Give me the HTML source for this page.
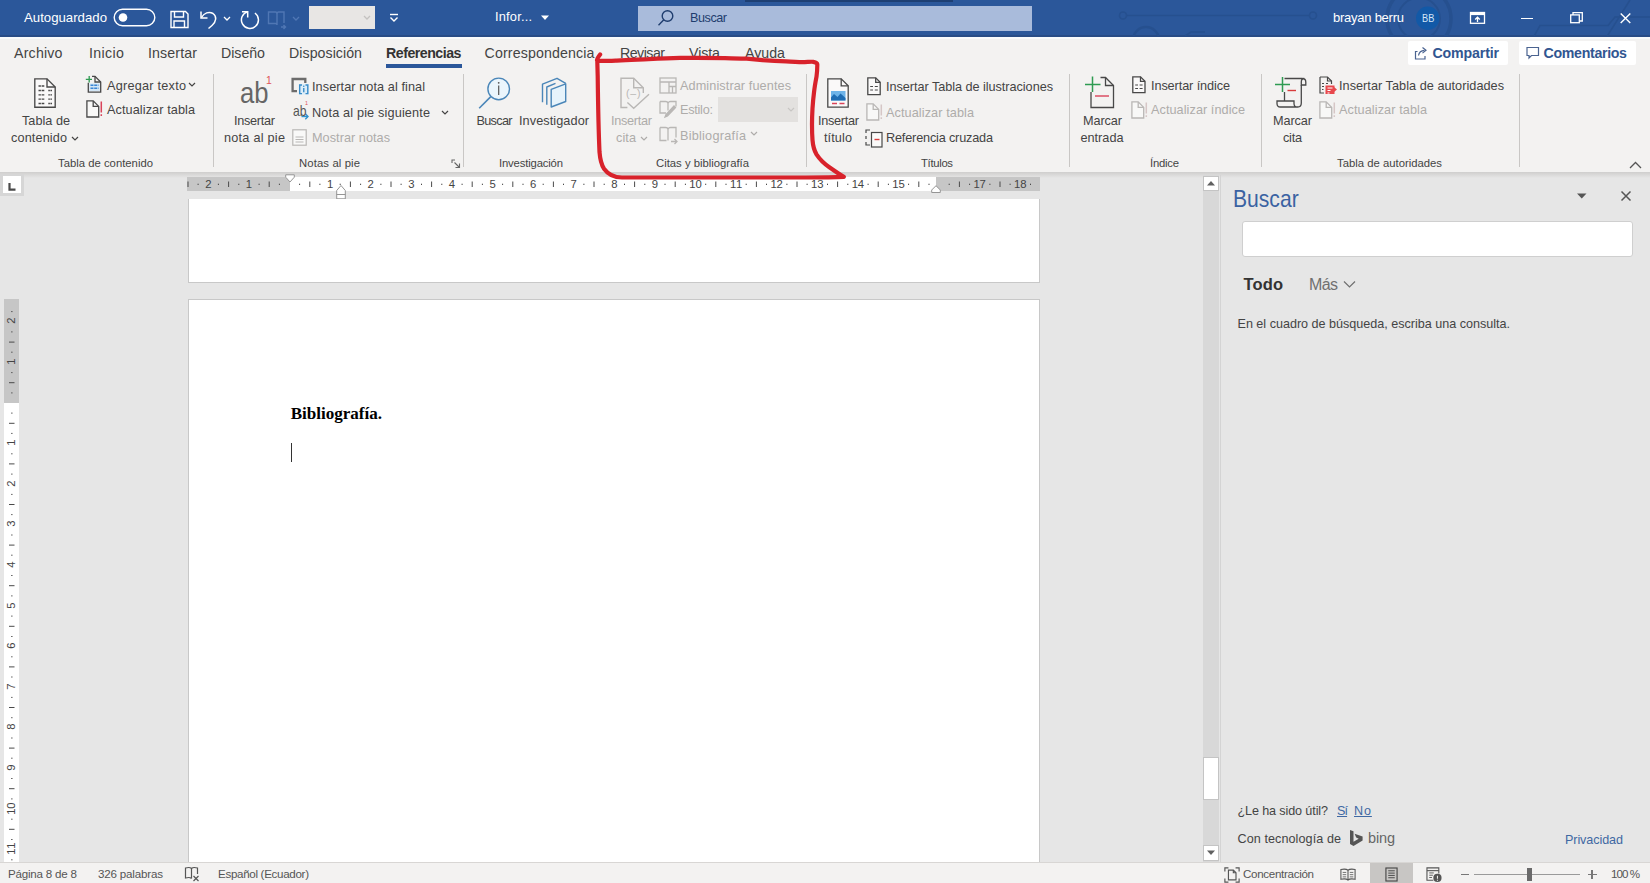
<!DOCTYPE html>
<html lang="es"><head><meta charset="utf-8"><title>Word</title><style>
html,body{margin:0;padding:0;}
body{width:1650px;height:883px;overflow:hidden;position:relative;background:#e6e6e6;font-family:"Liberation Sans",sans-serif;color:#444;}
div,svg,span{position:absolute;}
span{white-space:pre;line-height:1;}
svg{overflow:visible;}
</style></head><body>
<div style="left:0px;top:0px;width:1650px;height:36.5px;background:#2b579a;"></div>
<div style="left:0px;top:35px;width:1650px;height:1.5px;background:#284c86;"></div>
<div style="left:1100px;top:0;width:550px;height:36px;overflow:hidden;"><svg style="left:0;top:0;" width="550" height="36" viewBox="0 0 550 36"><g fill="none" stroke="#26508f" stroke-width="1.600"><path d="M23 15.500H213"/><circle cx="23" cy="15.500" r="3.500" fill="#2b579a"/><circle cx="213" cy="15.500" r="3.500" fill="#2b579a"/><circle cx="46" cy="40" r="13" stroke-width="2.500"/><path d="M85 36l6-4h14"/><circle cx="319" cy="18.700" r="32" stroke-width="3.500"/><circle cx="319" cy="18.700" r="21" stroke-width="2"/><path d="M433 38l7-12.500h68l7-8.500h35M506 38l24-38"/></g></svg></div>
<div style="left:745px;top:0px;width:208px;height:1.5px;background:#1e3f73;"></div>
<svg style="left:113px;top:8px;" width="44" height="19" viewBox="0 0 44 19"><rect x="1.2" y="1.2" width="40.6" height="16.6" rx="8.3" fill="none" stroke="#fff" stroke-width="1.4"/><circle cx="10" cy="9.5" r="4.3" fill="#fff"/></svg>
<svg style="left:170px;top:10px;" width="19" height="19" viewBox="0 0 19 19"><g fill="none" stroke="#fff" stroke-width="1.4"><path d="M1 1.5h14.5l2.5 2.5v13.5h-17z"/><path d="M4.5 1.5v5.5h9v-5.5"/><path d="M4 17.5v-6.500h10.500v6.500"/></g></svg>
<svg style="left:199px;top:9px;" width="20" height="20" viewBox="0 0 20 20"><g fill="none" stroke="#fff" stroke-width="1.5"><path d="M2 2.5v6.500h6.500"/><path d="M2.500 8.500C5 4 10 2 14 4.500c4 2.800 3.500 8-1 12l-3.500 3"/></g></svg>
<svg style="left:223px;top:16px;" width="8" height="6" viewBox="0 0 8 6"><path d="M1 1l3 3 3-3" fill="none" stroke="#fff" stroke-width="1.3"/></svg>
<svg style="left:240px;top:9px;" width="20" height="20" viewBox="0 0 20 20"><g fill="none" stroke="#fff" stroke-width="1.5"><path d="M2 2.700H7.700V8.400"/><path d="M14.900 4A8.500 8.500 0 1 1 7.700 2.700"/></g></svg>
<svg style="left:267px;top:10px;" width="20" height="19" viewBox="0 0 20 19"><g fill="none" stroke="#5077b4" stroke-width="1.4"><path d="M1.500 2h7c.8 0 1.500.7 1.500 1.500V15c0-.8-.7-1.500-1.500-1.500h-7z"/><path d="M10 3.500c0-.8.700-1.500 1.500-1.500H17v11"/><path d="M14 17h4M16.500 15l2 2-2 2"/></g></svg>
<svg style="left:292px;top:16px;" width="8" height="6" viewBox="0 0 8 6"><path d="M1 1l3 3 3-3" fill="none" stroke="#5077b4" stroke-width="1.3"/></svg>
<div style="left:309px;top:6px;width:66px;height:23px;background:#e8e6e4;"></div>
<svg style="left:363px;top:15px;" width="8" height="6" viewBox="0 0 8 6"><path d="M1 1l3 3 3-3" fill="none" stroke="#c4c2c0" stroke-width="1.3"/></svg>
<svg style="left:389px;top:13px;" width="10" height="10" viewBox="0 0 10 10"><path d="M1 1.500h8" stroke="#fff" stroke-width="1.4"/><path d="M1.500 4.500l3.500 3.500 3.500-3.500" fill="none" stroke="#fff" stroke-width="1.400"/></svg>
<svg style="left:540px;top:14px;" width="10" height="7" viewBox="0 0 10 7"><path d="M1 1.500h8l-4 4.500z" fill="#fff"/></svg>
<div style="left:638px;top:6px;width:394px;height:25px;background:#a9bbdb;"></div>
<svg style="left:657px;top:9px;" width="18" height="18" viewBox="0 0 18 18"><g fill="none" stroke="#1f3d6e" stroke-width="1.4"><circle cx="10.500" cy="7" r="5.300"/><path d="M6.800 10.800L1.500 16.200"/></g></svg>
<svg style="left:1415px;top:5px;" width="26" height="26" viewBox="0 0 26 26"><circle cx="12.700" cy="13.300" r="11.700" fill="#1259a7"/></svg>
<svg style="left:1469px;top:11px;" width="17" height="14" viewBox="0 0 17 14"><g fill="none" stroke="#fff" stroke-width="1.300"><rect x="1.500" y="1.500" width="14" height="10.800"/><path d="M1.500 3h14" stroke-width="2.200"/><path d="M8.500 11v-4.500M6.200 8.500l2.300-2.300 2.300 2.300"/></g></svg>
<div style="left:1521px;top:17.5px;width:12px;height:1.4px;background:#fff;"></div>
<svg style="left:1570px;top:12px;" width="13" height="11.5" viewBox="0 0 13 11.5"><g fill="none" stroke="#fff" stroke-width="1.300"><rect x=".7" y="2.900" width="8.600" height="7.800"/><path d="M3 2.900v-2.200h9.300v8.300h-3"/></g></svg>
<svg style="left:1619px;top:11px;" width="14" height="14" viewBox="0 0 14 14"><path d="M1.700 2.500l9.600 9.600M11.300 2.500l-9.600 9.600" stroke="#fff" stroke-width="1.400" fill="none"/></svg>
<div style="left:0px;top:36.5px;width:1650px;height:135.5px;background:#f3f2f1;"></div>
<div style="left:0px;top:36.5px;width:1650px;height:2px;background:#f8fafc;"></div>
<div style="left:386px;top:64.3px;width:76px;height:3.3px;background:#2b579a;"></div>
<div style="left:1408px;top:41px;width:100px;height:24px;background:#fff;border-radius:2px;"></div>
<div style="left:1519px;top:41px;width:117px;height:24px;background:#fff;border-radius:2px;"></div>
<svg style="left:1414px;top:46px;" width="14" height="14" viewBox="0 0 14 14"><g fill="none" stroke="#4a6390" stroke-width="1.200"><path d="M3.500 5.500h-2v7.500h9.500v-3"/><path d="M4.500 9.500c.5-3 2.500-5 6-5.200"/><path d="M8.500 1.500l3.500 2.800-3.500 2.800"/></g></svg>
<svg style="left:1526px;top:46px;" width="14" height="14" viewBox="0 0 14 14"><path d="M1 1.500h11.500v8h-7l-2.500 2.500v-2.500h-2z" fill="none" stroke="#4a6390" stroke-width="1.200"/></svg>
<div style="left:212.5px;top:74px;width:1px;height:93px;background:#c9c7c5;"></div>
<div style="left:463px;top:74px;width:1px;height:93px;background:#c9c7c5;"></div>
<div style="left:806px;top:74px;width:1px;height:93px;background:#c9c7c5;"></div>
<div style="left:1069px;top:74px;width:1px;height:93px;background:#c9c7c5;"></div>
<div style="left:1260.5px;top:74px;width:1px;height:93px;background:#c9c7c5;"></div>
<div style="left:1519px;top:74px;width:1px;height:93px;background:#c9c7c5;"></div>
<svg style="left:34px;top:77.7px;" width="22" height="30" viewBox="0 0 22 30"><g fill="none" stroke="#484848" stroke-width="1.35"><path d="M.8 .8h12.2 l8.2 8.2 v20.2 h-20.4 z" fill="#fff" fill-opacity="0.55"/><path d="M13 .8v8.2 h8.2"/></g><path d="M4.500 8 h6.500" stroke="#484848" stroke-width="1.300" stroke-dasharray="2.400 .700"/><path d="M4.500 12.5 h6.500" stroke="#484848" stroke-width="1.300" stroke-dasharray="2.400 .700"/><path d="M14.300 12.5 h3.700" stroke="#484848" stroke-width="1.300" stroke-dasharray="1.600 .500"/><path d="M4.500 16.8 h6.500" stroke="#484848" stroke-width="1.300" stroke-dasharray="2.400 .700"/><path d="M14.300 16.8 h3.700" stroke="#484848" stroke-width="1.300" stroke-dasharray="1.600 .500"/><path d="M4.500 21.2 h6.500" stroke="#484848" stroke-width="1.300" stroke-dasharray="2.400 .700"/><path d="M14.300 21.2 h3.700" stroke="#484848" stroke-width="1.300" stroke-dasharray="1.600 .500"/><path d="M4.500 25.5 h6.500" stroke="#484848" stroke-width="1.300" stroke-dasharray="2.400 .700"/><path d="M14.300 25.5 h3.700" stroke="#484848" stroke-width="1.300" stroke-dasharray="1.600 .500"/></svg>
<svg style="left:71px;top:135.5px;" width="8" height="6" viewBox="0 0 8 6"><path d="M1 1l3 3 3-3" fill="none" stroke="#444" stroke-width="1.200"/></svg>
<svg style="left:85px;top:75px;" width="18" height="18" viewBox="0 0 18 18"><g fill="none" stroke-width="1.300"><rect x="4.300" y="8.400" width="10.400" height="8" fill="#d3e6f6" stroke="none"/><path d="M3.300 7.800v9.300h12.400v-10l-5.700-5.700h-3" stroke="#484848"/><path d="M10 1.200v5.800h5.700" stroke="#484848"/><path d="M.800 4.300h6.200M4.200 1v6.400" stroke="#2e9b52" stroke-width="1.300"/><path d="M5.500 10.200h8M5.500 13.300h8" stroke="#3b86d6" stroke-width="1.400" stroke-dasharray="3 .700"/></g></svg>
<svg style="left:188px;top:82px;" width="8" height="6" viewBox="0 0 8 6"><path d="M1 1l3 3 3-3" fill="none" stroke="#444" stroke-width="1.200"/></svg>
<svg style="left:86px;top:100px;" width="18" height="18" viewBox="0 0 18 18"><g fill="none" stroke-width="1.300"><path d="M.900 .900h6.300l5.500 5.500v10.600h-11.800z" stroke="#484848" fill="#fff" fill-opacity=".45"/><path d="M7.200 .900v5.500h5.500" stroke="#484848"/><path d="M15.300 1.500v11M15.300 14.300v1.800" stroke="#d9435a" stroke-width="1.500"/></g></svg>
<svg style="left:290px;top:77px;" width="20" height="19" viewBox="0 0 20 19"><g fill="none"><path d="M7 14.200H2.600V2H15.300V6" stroke="#6c6c6c" stroke-width="2.300"/><rect x="8.600" y="7" width="10.400" height="10.600" fill="#dcedf8"/><path d="M12 8H9.700V16.600H12M15.500 8H17.800V16.600H15.500" stroke="#3a8cc8" stroke-width="1.400"/><path d="M13.750 11v4.300" stroke="#3a8cc8" stroke-width="1.400"/><circle cx="13.750" cy="9.300" r=".8" fill="#3a8cc8"/></g></svg>
<svg style="left:297px;top:112px;" width="13" height="9" viewBox="0 0 13 9"><g fill="none" stroke="#2f93cf" stroke-width="1.400"><path d="M4.500 4.500h6.500"/><path d="M8.300 1.800l2.700 2.700-2.700 2.700"/></g></svg>
<svg style="left:441px;top:109.5px;" width="8" height="6" viewBox="0 0 8 6"><path d="M1 1l3 3 3-3" fill="none" stroke="#444" stroke-width="1.200"/></svg>
<svg style="left:292px;top:128.5px;" width="15" height="17" viewBox="0 0 15 17"><g fill="none" stroke="#b9b7b5" stroke-width="1.200"><rect x=".8" y=".8" width="13.400" height="15.400" fill="#fff" fill-opacity=".5"/><path d="M3.500 8h8M3.500 10.500h8M3.500 13h8"/></g></svg>
<svg style="left:451px;top:158.8px;" width="10" height="10" viewBox="0 0 10 10"><g fill="none" stroke="#666" stroke-width="1.100"><path d="M1 4v-3h3"/><path d="M3.500 3.500l5 5"/><path d="M8.500 4.500v4h-4"/></g></svg>
<svg style="left:478px;top:76px;" width="34" height="34" viewBox="0 0 34 34"><g fill="none" stroke="#4a86b8" stroke-width="1.400"><circle cx="20.700" cy="12.900" r="10.800" fill="#eaf5fc"/><path d="M12.800 20.600L1.200 32.200" stroke-width="1.600"/></g><path d="M20.700 9.500v9.500" stroke="#555" stroke-width="1.200"/><circle cx="20.700" cy="6.800" r=".9" fill="#555"/></svg>
<svg style="left:541px;top:76px;" width="28" height="32" viewBox="0 0 28 32"><g fill="none" stroke="#4a86b8" stroke-width="1.400" stroke-linejoin="round"><path d="M1.500 26.300V8.200L16 2.300L24.700 7.400"/><path d="M5.800 28.700V11L14.500 7.400"/><path d="M10.200 13.300L24.700 7.800V25.500L10.200 31Z" fill="#e6f3fb"/></g></svg>
<svg style="left:620px;top:76px;" width="30" height="33" viewBox="0 0 30 33"><g fill="none" stroke="#b9b7b5" stroke-width="1.400"><path d="M7.400 31.500H1V2.300H13.700L23.300 11.800V17"/><path d="M13.700 2.300V11.800H23.300"/><path d="M7.400 26.500L13.700 32.200L29 18.200"/></g></svg>
<svg style="left:640px;top:135.5px;" width="8" height="6" viewBox="0 0 8 6"><path d="M1 1l3 3 3-3" fill="none" stroke="#aeacaa" stroke-width="1.200"/></svg>
<svg style="left:659px;top:76.5px;" width="18" height="17" viewBox="0 0 18 17"><g fill="none" stroke="#b9b7b5" stroke-width="1.300"><rect x="1" y="1" width="16" height="15"/><path d="M1 5h16M10 5v11M10 9.500h7M13.500 9.500v6.500"/></g></svg>
<svg style="left:659px;top:100px;" width="18" height="19" viewBox="0 0 18 19"><g fill="none" stroke="#b9b7b5" stroke-width="1.300"><path d="M1 1.500v11.500h6M1 1.500h5.500c1.500 0 2.500 1 2.500 2v7M9 3.500c0-1 1-2 2.500-2h5.500v5"/><path d="M16.500 7.500l-8 8.500-2.500 1 1-2.500 8-8.500z" fill="#b9b7b5"/></g></svg>
<div style="left:718px;top:97px;width:80px;height:25px;background:#e3e1df;"></div>
<svg style="left:787px;top:107px;" width="8" height="6" viewBox="0 0 8 6"><path d="M1 1l3 3 3-3" fill="none" stroke="#c8c6c4" stroke-width="1.200"/></svg>
<svg style="left:659px;top:125.5px;" width="19" height="19" viewBox="0 0 19 19"><g fill="none" stroke="#b9b7b5" stroke-width="1.300"><path d="M1 1.500v13h6.500M1 1.500h5.500c1.500 0 2.500 1 2.500 2v11M9 3.500c0-1 1-2 2.500-2h5.500v10"/><path d="M12 15.500h6M15.500 13l2.500 2.500-2.500 2.500"/></g></svg>
<svg style="left:750px;top:131px;" width="8" height="6" viewBox="0 0 8 6"><path d="M1 1l3 3 3-3" fill="none" stroke="#aeacaa" stroke-width="1.200"/></svg>
<svg style="left:827px;top:78px;" width="22" height="30" viewBox="0 0 22 30"><g fill="none" stroke="#484848" stroke-width="1.3"><path d="M.8 .8h13.4 l7 7 v21.4 h-20.4 z" fill="#fff" fill-opacity="0.55"/><path d="M14.2 .8v7 h7"/></g><rect x="4" y="13" width="14.500" height="9.500" fill="#6db3e8"/><path d="M4 19.500l3-3.500 3.500 3 3-3.500 5 4.500v2.500h-14.500z" fill="#1f6db3"/><path d="M5 25.500h5M12.500 25.500h5" stroke="#d9435a" stroke-width="1.300"/></svg>
<svg style="left:867px;top:77px;" width="14" height="18.5" viewBox="0 0 14 18.5"><g fill="none" stroke="#484848" stroke-width="1.3"><path d="M.8 .8h7.9 l4.5 4.5 v12.4 h-12.4 z" fill="#fff" fill-opacity="0.55"/><path d="M8.7 .8v4.5 h4.5"/></g><path d="M3.200 9.500h2.800M7.800 9.500h3M3.200 13h2.800M7.800 13h3" stroke="#484848" stroke-width="1.200"/></svg>
<svg style="left:865.5px;top:103px;" width="18" height="18" viewBox="0 0 18 18"><g fill="none" stroke-width="1.300"><path d="M.900 .900h6.300l5.500 5.500v10.600h-11.800z" stroke="#b9b7b5" fill="#fff" fill-opacity=".45"/><path d="M7.200 .900v5.500h5.500" stroke="#b9b7b5"/><path d="M15.300 1.500v11M15.300 14.300v1.800" stroke="#d6c6c6" stroke-width="1.500"/></g></svg>
<svg style="left:865px;top:128.5px;" width="18" height="19" viewBox="0 0 18 19"><g fill="none" stroke="#484848" stroke-width="1.200"><path d="M5 1h-4v3M1 7v3M1 13v3h4" /><rect x="6.500" y="3.500" width="10.500" height="14.500" fill="#fff" fill-opacity=".6"/><path d="M9.500 10.500h5" stroke="#d83b3b" stroke-width="1.400"/></g></svg>
<svg style="left:1084px;top:75px;" width="32" height="34" viewBox="0 0 32 34"><g fill="none" stroke-width="1.300"><path d="M7 17v15.500h22.500v-22l-8-8h-5" stroke="#484848"/><path d="M21.500 2.500v8h8" stroke="#484848"/><path d="M1 9.500h15.500M8.500 1.500v15.500" stroke="#2e9b52" stroke-width="1.500"/><path d="M11 21h14" stroke="#d9435a" stroke-width="1.400"/></g></svg>
<svg style="left:1131.5px;top:76px;" width="13.8" height="17.5" viewBox="0 0 13.8 17.5"><g fill="none" stroke="#484848" stroke-width="1.3"><path d="M.8 .8h7.7 l4.5 4.5 v11.4 h-12.2 z" fill="#fff" fill-opacity="0.55"/><path d="M8.5 .8v4.5 h4.5"/></g><path d="M3.200 9h2.800M7.600 9h3M3.200 12.500h2.800M7.600 12.500h3" stroke="#484848" stroke-width="1.200"/></svg>
<svg style="left:1130.5px;top:100.5px;" width="18" height="18" viewBox="0 0 18 18"><g fill="none" stroke-width="1.300"><path d="M.900 .900h6.300l5.500 5.500v10.600h-11.800z" stroke="#b9b7b5" fill="#fff" fill-opacity=".45"/><path d="M7.200 .900v5.500h5.500" stroke="#b9b7b5"/><path d="M15.300 1.500v11M15.300 14.300v1.800" stroke="#d6c6c6" stroke-width="1.500"/></g></svg>
<svg style="left:1274px;top:75px;" width="34" height="34" viewBox="0 0 34 34"><g fill="none" stroke-width="1.300"><path d="M10.500 17v9M10.500 3.500h17.500c2.500 0 3.800 1.500 3.800 3.500v3h-4.500v-3c0-2 1.300-3.500 3-3.500" stroke="#484848"/><path d="M27.300 10v18c0 2.500-1.500 4-3.500 4h-17.500c-2 0-3.300-1.500-3.300-3.500v-2.500h17v2.500c0 2 1.300 3.500 3.300 3.500" stroke="#484848"/><path d="M1 9.500h15M8.500 2v15" stroke="#2e9b52" stroke-width="1.500"/><path d="M13.500 15.500h8.500" stroke="#d83b3b" stroke-width="1.400"/></g></svg>
<svg style="left:1319px;top:75.5px;" width="19" height="19" viewBox="0 0 19 19"><g fill="none" stroke-width="1.200"><path d="M1 1h7.500l4 4v3M1 1v16h4" stroke="#484848"/><path d="M8.500 1v4h4" stroke="#484848"/><path d="M3 7.500h2M3 10.500h2M3 13.500h1.500M7 7.500h2" stroke="#484848"/><rect x="6.500" y="9.500" width="9" height="8.500" fill="#e8484d" stroke="none"/><path d="M15 11l3 2.500-3 2.500z" fill="#e8484d" stroke="none"/><path d="M8.500 12h5M8.500 14.500h3M8.500 17h2" stroke="#fff" stroke-width="1"/></g></svg>
<svg style="left:1318.5px;top:100.5px;" width="18" height="18" viewBox="0 0 18 18"><g fill="none" stroke-width="1.300"><path d="M.900 .900h6.300l5.500 5.500v10.600h-11.800z" stroke="#b9b7b5" fill="#fff" fill-opacity=".45"/><path d="M7.200 .900v5.500h5.500" stroke="#b9b7b5"/><path d="M15.300 1.500v11M15.300 14.300v1.800" stroke="#d6c6c6" stroke-width="1.500"/></g></svg>
<svg style="left:1629px;top:160.5px;" width="13" height="8" viewBox="0 0 13 8"><path d="M1 7l5.500-5.500 5.500 5.500" fill="none" stroke="#555" stroke-width="1.300"/></svg>
<div style="left:0;top:172px;width:1650px;height:5.500px;background:linear-gradient(#cfcecd,#e6e6e6);"></div>
<div style="left:0px;top:173.5px;width:24px;height:22px;background:#d6d6d6;"></div>
<div style="left:3px;top:176px;width:18px;height:16.5px;background:#fff;"></div>
<svg style="left:7px;top:181px;" width="10" height="10" viewBox="0 0 10 10"><path d="M2.500 2v6.700h6" fill="none" stroke="#4a4a4a" stroke-width="2.200"/></svg>
<div style="left:187px;top:177.3px;width:102.5px;height:13.5px;background:#c6c6c6;"></div>
<div style="left:289.5px;top:177.3px;width:646.5px;height:13.5px;background:#fff;"></div>
<div style="left:936px;top:177.3px;width:103.5px;height:13.5px;background:#c6c6c6;"></div>
<svg style="left:187px;top:178.4px;" width="853" height="13" viewBox="0 0 853 13"><g stroke="#4a4a4a" stroke-width="1" fill="none"><path d="M1.0 3.500v5.500"/><path d="M11.1 5.700v1.300"/><path d="M31.4 5.700v1.300"/><path d="M41.6 3.500v5.500"/><path d="M51.8 5.700v1.300"/><path d="M72.1 5.700v1.300"/><path d="M82.2 3.500v5.500"/><path d="M92.4 5.700v1.300"/><path d="M112.6 5.700v1.300"/><path d="M122.8 3.500v5.500"/><path d="M132.9 5.700v1.300"/><path d="M153.2 5.700v1.300"/><path d="M163.4 3.500v5.500"/><path d="M173.6 5.700v1.300"/><path d="M193.9 5.700v1.300"/><path d="M204.0 3.500v5.500"/><path d="M214.1 5.700v1.300"/><path d="M234.5 5.700v1.300"/><path d="M244.6 3.500v5.500"/><path d="M254.8 5.700v1.300"/><path d="M275.1 5.700v1.300"/><path d="M285.2 3.500v5.500"/><path d="M295.4 5.700v1.300"/><path d="M315.6 5.700v1.300"/><path d="M325.8 3.500v5.500"/><path d="M336.0 5.700v1.300"/><path d="M356.2 5.700v1.300"/><path d="M366.4 3.500v5.500"/><path d="M376.5 5.700v1.300"/><path d="M396.9 5.700v1.300"/><path d="M407.0 3.500v5.500"/><path d="M417.2 5.700v1.300"/><path d="M437.5 5.700v1.300"/><path d="M447.6 3.500v5.500"/><path d="M457.8 5.700v1.300"/><path d="M478.0 5.700v1.300"/><path d="M488.2 3.500v5.500"/><path d="M498.4 5.700v1.300"/><path d="M518.7 5.700v1.300"/><path d="M528.8 3.500v5.500"/><path d="M539.0 5.700v1.300"/><path d="M559.2 5.700v1.300"/><path d="M569.4 3.500v5.500"/><path d="M579.5 5.700v1.300"/><path d="M599.9 5.700v1.300"/><path d="M610.0 3.500v5.500"/><path d="M620.1 5.700v1.300"/><path d="M640.5 5.700v1.300"/><path d="M650.6 3.500v5.500"/><path d="M660.8 5.700v1.300"/><path d="M681.1 5.700v1.300"/><path d="M691.2 3.500v5.500"/><path d="M701.4 5.700v1.300"/><path d="M721.6 5.700v1.300"/><path d="M731.8 3.500v5.500"/><path d="M742.0 5.700v1.300"/><path d="M762.2 5.700v1.300"/><path d="M772.4 3.500v5.500"/><path d="M782.6 5.700v1.300"/><path d="M802.9 5.700v1.300"/><path d="M813.0 3.500v5.500"/><path d="M823.1 5.700v1.300"/><path d="M843.5 5.700v1.300"/></g></svg>
<svg style="left:285px;top:174px;" width="10" height="10" viewBox="0 0 10 10"><path d="M.700 .800h8.600v2.400l-4.300 4.800-4.300-4.800z" fill="#fff" stroke="#959595" stroke-width="1"/></svg>
<svg style="left:336px;top:183.5px;" width="10" height="16" viewBox="0 0 10 16"><path d="M.700 6.500L5 1.500L9.300 6.500V10.500H.700Z" fill="#fff" stroke="#959595" stroke-width="1"/><rect x=".700" y="10.500" width="8.600" height="4.300" fill="#fff" stroke="#959595" stroke-width="1"/></svg>
<svg style="left:931px;top:184.5px;" width="10" height="9" viewBox="0 0 10 9"><path d="M.700 7.500v-2.500l4.300-4.300 4.300 4.300v2.500z" fill="#fff" stroke="#959595" stroke-width="1"/></svg>
<div style="left:188px;top:198.5px;width:851.5px;height:84.5px;background:#fff;border:1px solid #c8c8c8;border-top:none;box-sizing:border-box;"></div>
<div style="left:188px;top:299px;width:851.5px;height:563px;background:#fff;border:1px solid #c8c8c8;border-bottom:none;box-sizing:border-box;"></div>
<div style="left:290.5px;top:442.5px;width:1px;height:19px;background:#333;"></div>
<div style="left:4px;top:298.5px;width:15px;height:104px;background:#c6c6c6;"></div>
<div style="left:4px;top:402.5px;width:15px;height:459.5px;background:#fff;"></div>
<svg style="left:4px;top:298.5px;" width="15" height="564" viewBox="0 0 15 564"><g stroke="#4a4a4a" stroke-width="1" fill="none"><path d="M7.200 12.6h1.300"/><path d="M7.200 32.9h1.300"/><path d="M5 43.1h5.500"/><path d="M7.200 53.2h1.300"/><path d="M7.200 73.6h1.300"/><path d="M5 83.7h5.500"/><path d="M7.200 93.9h1.300"/><path d="M7.200 114.1h1.300"/><path d="M5 124.3h5.500"/><path d="M7.200 134.4h1.300"/><path d="M7.200 154.8h1.300"/><path d="M5 164.9h5.500"/><path d="M7.200 175.1h1.300"/><path d="M7.200 195.4h1.300"/><path d="M5 205.5h5.500"/><path d="M7.200 215.6h1.300"/><path d="M7.200 236.0h1.300"/><path d="M5 246.1h5.500"/><path d="M7.200 256.2h1.300"/><path d="M7.200 276.5h1.300"/><path d="M5 286.7h5.500"/><path d="M7.200 296.9h1.300"/><path d="M7.200 317.1h1.300"/><path d="M5 327.3h5.500"/><path d="M7.200 337.5h1.300"/><path d="M7.200 357.8h1.300"/><path d="M5 367.9h5.500"/><path d="M7.200 378.0h1.300"/><path d="M7.200 398.4h1.300"/><path d="M5 408.5h5.500"/><path d="M7.200 418.7h1.300"/><path d="M7.200 439.0h1.300"/><path d="M5 449.1h5.500"/><path d="M7.200 459.2h1.300"/><path d="M7.200 479.5h1.300"/><path d="M5 489.7h5.500"/><path d="M7.200 499.9h1.300"/><path d="M7.200 520.2h1.300"/><path d="M5 530.3h5.500"/><path d="M7.200 540.5h1.300"/><path d="M7.200 560.8h1.300"/></g></svg>
<div style="left:1203px;top:175px;width:16px;height:687px;background:#d8d8d8;"></div>
<div style="left:1203px;top:175.5px;width:15.5px;height:15px;background:#fff;border:1px solid #c4c4c4;box-sizing:border-box;"></div>
<svg style="left:1206px;top:179px;" width="10" height="8" viewBox="0 0 10 8"><path d="M1 6.500l4-4.500 4 4.500z" fill="#606060"/></svg>
<div style="left:1203px;top:757px;width:15.5px;height:43px;background:#fff;border:1px solid #c4c4c4;box-sizing:border-box;"></div>
<div style="left:1203px;top:845px;width:15.5px;height:15.5px;background:#fff;border:1px solid #c4c4c4;box-sizing:border-box;"></div>
<svg style="left:1206px;top:849px;" width="10" height="8" viewBox="0 0 10 8"><path d="M1 1.500l4 4.500 4-4.500z" fill="#606060"/></svg>
<div style="left:1220px;top:175px;width:1px;height:687px;background:#d4d4d4;"></div>
<svg style="left:1576px;top:192px;" width="12" height="8" viewBox="0 0 12 8"><path d="M1 1.500h9.500l-4.750 5z" fill="#555"/></svg>
<svg style="left:1620px;top:190px;" width="12" height="12" viewBox="0 0 12 12"><path d="M1.500 1.500l9 9M10.500 1.500l-9 9" stroke="#555" stroke-width="1.500" fill="none"/></svg>
<div style="left:1242px;top:221px;width:391px;height:35.5px;background:#fff;border:1px solid #cfcfcf;border-radius:3px;box-sizing:border-box;"></div>
<svg style="left:1343px;top:280px;" width="13" height="9" viewBox="0 0 13 9"><path d="M1 1.500l5.500 5.500 5.500-5.500" fill="none" stroke="#707070" stroke-width="1.200"/></svg>
<svg style="left:1349px;top:829px;" width="15" height="18" viewBox="0 0 15 18"><path d="M1 1l3.500 1.300v10.500l5.200-3-2.500-1.200-1.600-3.900 8 2.800v4.100l-9.100 5.300-3.500-2z" fill="#555"/></svg>
<div style="left:0px;top:862px;width:1650px;height:21px;background:#f3f2f1;"></div>
<div style="left:0px;top:862px;width:1650px;height:1px;background:#d8d6d4;"></div>
<svg style="left:184px;top:866px;" width="16" height="16" viewBox="0 0 16 16"><g fill="none" stroke="#555" stroke-width="1.200"><path d="M7.500 2.500c-1-1-3.500-1.200-6-.500v10c2.500-.700 5-.500 6 .500M7.500 2.500v10M7.500 2.500c1-1 3.500-1.200 6-.500v6"/><path d="M9.500 10l5 5M14.500 10l-5 5"/></g></svg>
<svg style="left:1224px;top:866.5px;" width="16" height="16" viewBox="0 0 18 18"><g fill="none" stroke="#555" stroke-width="1.300"><path d="M1 5v-4h4M13 1h4v4M17 13v4h-4M5 17h-4v-4"/><path d="M5 3.500h5.500l3 3v8h-8.500z"/><path d="M10.500 3.500v3h3"/></g></svg>
<svg style="left:1340px;top:867.5px;" width="16" height="13.3" viewBox="0 0 18 15"><g fill="none" stroke="#555" stroke-width="1.200"><path d="M9 2.500c-1.500-1.200-4.500-1.500-8-.800v11c3.500-.700 6.500-.400 8 .800c1.500-1.200 4.500-1.500 8-.800v-11c-3.500-.700-6.500-.400-8 .800zM9 2.500v11"/><path d="M3 5h4M3 7.500h4M3 10h4M11 5h4M11 7.500h4M11 10h4" stroke-width=".9"/></g></svg>
<div style="left:1370px;top:863px;width:43px;height:20px;background:#c8c6c4;"></div>
<svg style="left:1384.5px;top:867px;" width="13" height="15" viewBox="0 0 14 16"><g fill="none" stroke="#444" stroke-width="1.200"><rect x="1" y="1" width="12" height="14"/><path d="M3.500 4h7M3.500 6.500h7M3.500 9h7M3.500 11.500h7" stroke-width="1"/></g></svg>
<svg style="left:1426px;top:867px;" width="16.5" height="15.5" viewBox="0 0 18 17"><g fill="none" stroke="#555" stroke-width="1.200"><path d="M8 14.500h-7v-13.500h13v6"/><path d="M1 4h13"/><path d="M3.500 6.500h5M3.500 9h4M3.500 11.500h3" stroke-width="1"/></g><circle cx="12.500" cy="12" r="4.500" fill="#555"/><path d="M12.500 9.500v3.500M12.500 14v1" stroke="#f3f2f1" stroke-width="1.100"/></svg>
<div style="left:1461px;top:874px;width:8px;height:1.2px;background:#777;"></div>
<div style="left:1474px;top:874.3px;width:106px;height:1px;background:#9a9a9a;"></div>
<div style="left:1527.3px;top:868px;width:4.8px;height:13px;background:#6a6a6a;"></div>
<div style="left:1587.5px;top:874px;width:9px;height:1.1px;background:#777;"></div>
<div style="left:1591.45px;top:870px;width:1.1px;height:9px;background:#777;"></div>
<span style="left:24.00px;top:10.90px;font-size:13.2px;letter-spacing:0.011px;color:#fff;">Autoguardado</span>
<span style="left:495.00px;top:11.10px;font-size:12.8px;letter-spacing:0.203px;color:#fff;">Infor...</span>
<span style="left:690.00px;top:11.70px;font-size:12.6px;letter-spacing:-0.441px;color:#1f3d6e;">Buscar</span>
<span style="left:1333.00px;top:11.00px;font-size:13px;letter-spacing:-0.247px;color:#fff;">brayan berru</span>
<span style="left:1422.30px;top:12.75px;font-size:10.5px;letter-spacing:0.000px;color:#d4e6f8;transform:scaleX(0.8776);transform-origin:0 0;">BB</span>
<span style="left:14.00px;top:45.90px;font-size:14.2px;letter-spacing:0.198px;">Archivo</span>
<span style="left:89.00px;top:45.90px;font-size:14.2px;letter-spacing:0.375px;">Inicio</span>
<span style="left:148.00px;top:45.90px;font-size:14.2px;letter-spacing:0.127px;">Insertar</span>
<span style="left:221.00px;top:45.90px;font-size:14.2px;letter-spacing:-0.034px;">Diseño</span>
<span style="left:289.00px;top:45.90px;font-size:14.2px;letter-spacing:0.045px;">Disposición</span>
<span style="left:386.00px;top:45.90px;font-size:14.2px;letter-spacing:-0.495px;font-weight:700;color:#333;">Referencias</span>
<span style="left:484.50px;top:45.90px;font-size:14.2px;letter-spacing:0.138px;">Correspondencia</span>
<span style="left:620.00px;top:45.90px;font-size:14.2px;letter-spacing:-0.516px;">Revisar</span>
<span style="left:689.00px;top:45.90px;font-size:14.2px;letter-spacing:-0.074px;">Vista</span>
<span style="left:745.00px;top:45.90px;font-size:14.2px;letter-spacing:0.004px;">Ayuda</span>
<span style="left:1432.50px;top:45.90px;font-size:14.2px;letter-spacing:-0.162px;font-weight:700;color:#315691;">Compartir</span>
<span style="left:1543.50px;top:45.90px;font-size:14.2px;letter-spacing:-0.322px;font-weight:700;color:#315691;">Comentarios</span>
<span style="left:22.00px;top:114.65px;font-size:12.7px;letter-spacing:0.004px;">Tabla de</span>
<span style="left:11.00px;top:131.65px;font-size:12.7px;letter-spacing:0.121px;">contenido</span>
<span style="left:107.00px;top:79.65px;font-size:12.7px;letter-spacing:0.236px;">Agregar texto</span>
<span style="left:107.00px;top:103.65px;font-size:12.7px;letter-spacing:0.083px;">Actualizar tabla</span>
<span style="left:58.00px;top:158.35px;font-size:11.3px;letter-spacing:0.009px;">Tabla de contenido</span>
<span style="left:239.50px;top:77.75px;font-size:29.5px;letter-spacing:0.000px;color:#666;transform:scaleX(0.8682);transform-origin:0 0;">ab</span>
<span style="left:266.00px;top:74.75px;font-size:10.5px;letter-spacing:0.000px;color:#e0525a;transform:scaleX(0.9925);transform-origin:0 0;">1</span>
<span style="left:234.00px;top:114.65px;font-size:12.7px;letter-spacing:-0.288px;">Insertar</span>
<span style="left:224.00px;top:131.65px;font-size:12.7px;letter-spacing:0.244px;">nota al pie</span>
<span style="left:312.00px;top:80.65px;font-size:12.7px;letter-spacing:0.074px;">Insertar nota al final</span>
<span style="left:292.50px;top:103.00px;font-size:15px;letter-spacing:0.000px;color:#555;transform:scaleX(0.8090);transform-origin:0 0;">ab</span>
<span style="left:305.20px;top:101.25px;font-size:5.5px;letter-spacing:0.000px;color:#e0525a;transform:scaleX(0.9796);transform-origin:0 0;">1</span>
<span style="left:312.00px;top:106.65px;font-size:12.7px;letter-spacing:0.152px;">Nota al pie siguiente</span>
<span style="left:312.00px;top:131.65px;font-size:12.7px;letter-spacing:0.036px;color:#aeacaa;">Mostrar notas</span>
<span style="left:299.00px;top:158.35px;font-size:11.3px;letter-spacing:0.122px;">Notas al pie</span>
<span style="left:476.50px;top:114.65px;font-size:12.7px;letter-spacing:-0.700px;">Buscar</span>
<span style="left:519.00px;top:114.65px;font-size:12.7px;letter-spacing:0.080px;">Investigador</span>
<span style="left:499.00px;top:158.35px;font-size:11.3px;letter-spacing:-0.163px;">Investigación</span>
<span style="left:626.00px;top:87.75px;font-size:10.5px;letter-spacing:0.828px;color:#b9b7b5;">(–)</span>
<span style="left:611.00px;top:114.65px;font-size:12.7px;letter-spacing:-0.288px;color:#aeacaa;">Insertar</span>
<span style="left:616.00px;top:131.65px;font-size:12.7px;letter-spacing:0.083px;color:#aeacaa;">cita</span>
<span style="left:680.00px;top:79.65px;font-size:12.7px;letter-spacing:0.094px;color:#aeacaa;">Administrar fuentes</span>
<span style="left:680.00px;top:103.65px;font-size:12.7px;letter-spacing:-0.260px;color:#aeacaa;">Estilo:</span>
<span style="left:680.00px;top:129.65px;font-size:12.7px;letter-spacing:0.229px;color:#aeacaa;">Bibliografía</span>
<span style="left:656.00px;top:158.35px;font-size:11.3px;letter-spacing:0.003px;">Citas y bibliografía</span>
<span style="left:818.00px;top:114.65px;font-size:12.7px;letter-spacing:-0.288px;">Insertar</span>
<span style="left:824.00px;top:131.65px;font-size:12.7px;letter-spacing:0.097px;">título</span>
<span style="left:886.00px;top:80.65px;font-size:12.7px;letter-spacing:-0.044px;">Insertar Tabla de ilustraciones</span>
<span style="left:886.00px;top:106.65px;font-size:12.7px;letter-spacing:0.083px;color:#aeacaa;">Actualizar tabla</span>
<span style="left:886.00px;top:131.65px;font-size:12.7px;letter-spacing:-0.178px;">Referencia cruzada</span>
<span style="left:921.00px;top:158.35px;font-size:11.3px;letter-spacing:-0.318px;">Títulos</span>
<span style="left:1083.00px;top:114.65px;font-size:12.7px;letter-spacing:-0.097px;">Marcar</span>
<span style="left:1080.50px;top:131.65px;font-size:12.7px;letter-spacing:-0.005px;">entrada</span>
<span style="left:1151.00px;top:79.65px;font-size:12.7px;letter-spacing:-0.100px;">Insertar índice</span>
<span style="left:1151.00px;top:103.65px;font-size:12.7px;letter-spacing:0.057px;color:#aeacaa;">Actualizar índice</span>
<span style="left:1150.00px;top:158.35px;font-size:11.3px;letter-spacing:-0.231px;">Índice</span>
<span style="left:1273.00px;top:114.65px;font-size:12.7px;letter-spacing:-0.097px;">Marcar</span>
<span style="left:1283.00px;top:131.65px;font-size:12.7px;letter-spacing:-0.250px;">cita</span>
<span style="left:1339.00px;top:79.65px;font-size:12.7px;letter-spacing:0.032px;">Insertar Tabla de autoridades</span>
<span style="left:1339.00px;top:103.65px;font-size:12.7px;letter-spacing:0.083px;color:#aeacaa;">Actualizar tabla</span>
<span style="left:1337.00px;top:158.35px;font-size:11.3px;letter-spacing:0.006px;">Tabla de autoridades</span>
<span style="left:205.20px;top:179.35px;font-size:11.3px;letter-spacing:-0.097px;">2</span>
<span style="left:245.80px;top:179.35px;font-size:11.3px;letter-spacing:-0.097px;">1</span>
<span style="left:327.00px;top:179.35px;font-size:11.3px;letter-spacing:-0.097px;">1</span>
<span style="left:367.60px;top:179.35px;font-size:11.3px;letter-spacing:-0.097px;">2</span>
<span style="left:408.20px;top:179.35px;font-size:11.3px;letter-spacing:-0.097px;">3</span>
<span style="left:448.80px;top:179.35px;font-size:11.3px;letter-spacing:-0.097px;">4</span>
<span style="left:489.40px;top:179.35px;font-size:11.3px;letter-spacing:-0.097px;">5</span>
<span style="left:530.00px;top:179.35px;font-size:11.3px;letter-spacing:-0.097px;">6</span>
<span style="left:570.60px;top:179.35px;font-size:11.3px;letter-spacing:-0.097px;">7</span>
<span style="left:611.20px;top:179.35px;font-size:11.3px;letter-spacing:-0.097px;">8</span>
<span style="left:651.80px;top:179.35px;font-size:11.3px;letter-spacing:-0.097px;">9</span>
<span style="left:689.30px;top:179.35px;font-size:11.3px;letter-spacing:-0.178px;">10</span>
<span style="left:729.90px;top:179.35px;font-size:11.3px;letter-spacing:0.666px;">11</span>
<span style="left:770.50px;top:179.35px;font-size:11.3px;letter-spacing:-0.178px;">12</span>
<span style="left:811.10px;top:179.35px;font-size:11.3px;letter-spacing:-0.178px;">13</span>
<span style="left:851.70px;top:179.35px;font-size:11.3px;letter-spacing:-0.178px;">14</span>
<span style="left:892.30px;top:179.35px;font-size:11.3px;letter-spacing:-0.178px;">15</span>
<span style="left:973.50px;top:179.35px;font-size:11.3px;letter-spacing:-0.178px;">17</span>
<span style="left:1014.10px;top:179.35px;font-size:11.3px;letter-spacing:-0.178px;">18</span>
<span style="left:290.70px;top:404.95px;font-size:17.1px;letter-spacing:-0.030px;font-family:'Liberation Serif', serif;font-weight:700;color:#000;">Bibliografía.</span>
<span style="left:8.40px;top:315.35px;font-size:11.3px;letter-spacing:-0.097px;transform:rotate(-90deg);transform-origin:3.10px 5.55px;">2</span>
<span style="left:8.40px;top:356.35px;font-size:11.3px;letter-spacing:-0.097px;transform:rotate(-90deg);transform-origin:3.10px 5.55px;">1</span>
<span style="left:8.40px;top:437.35px;font-size:11.3px;letter-spacing:-0.097px;transform:rotate(-90deg);transform-origin:3.10px 5.55px;">1</span>
<span style="left:8.40px;top:478.35px;font-size:11.3px;letter-spacing:-0.097px;transform:rotate(-90deg);transform-origin:3.10px 5.55px;">2</span>
<span style="left:8.40px;top:518.35px;font-size:11.3px;letter-spacing:-0.097px;transform:rotate(-90deg);transform-origin:3.10px 5.55px;">3</span>
<span style="left:8.40px;top:559.35px;font-size:11.3px;letter-spacing:-0.097px;transform:rotate(-90deg);transform-origin:3.10px 5.55px;">4</span>
<span style="left:8.40px;top:600.35px;font-size:11.3px;letter-spacing:-0.097px;transform:rotate(-90deg);transform-origin:3.10px 5.55px;">5</span>
<span style="left:8.40px;top:640.35px;font-size:11.3px;letter-spacing:-0.097px;transform:rotate(-90deg);transform-origin:3.10px 5.55px;">6</span>
<span style="left:8.40px;top:681.35px;font-size:11.3px;letter-spacing:-0.097px;transform:rotate(-90deg);transform-origin:3.10px 5.55px;">7</span>
<span style="left:8.40px;top:721.35px;font-size:11.3px;letter-spacing:-0.097px;transform:rotate(-90deg);transform-origin:3.10px 5.55px;">8</span>
<span style="left:8.40px;top:762.35px;font-size:11.3px;letter-spacing:-0.097px;transform:rotate(-90deg);transform-origin:3.10px 5.55px;">9</span>
<span style="left:5.30px;top:803.35px;font-size:11.3px;letter-spacing:-0.178px;transform:rotate(-90deg);transform-origin:6.20px 5.55px;">10</span>
<span style="left:5.30px;top:843.35px;font-size:11.3px;letter-spacing:0.666px;transform:rotate(-90deg);transform-origin:6.20px 5.55px;">11</span>
<span style="left:1232.80px;top:188.30px;font-size:23.4px;letter-spacing:0.000px;color:#3a62a2;transform:scaleX(0.9023);transform-origin:0 0;">Buscar</span>
<span style="left:1243.50px;top:275.75px;font-size:16.5px;letter-spacing:0.135px;font-weight:700;color:#333;">Todo</span>
<span style="left:1309.00px;top:276.50px;font-size:16px;letter-spacing:-0.617px;color:#707070;">Más</span>
<span style="left:1237.50px;top:317.70px;font-size:12.6px;letter-spacing:-0.012px;">En el cuadro de búsqueda, escriba una consulta.</span>
<span style="left:1237.50px;top:804.70px;font-size:12.6px;letter-spacing:-0.120px;">¿Le ha sido útil?</span>
<span style="left:1337.00px;top:804.70px;font-size:12.6px;letter-spacing:-0.906px;color:#3f68a3;text-decoration:underline;">Sí</span>
<span style="left:1354.00px;top:804.70px;font-size:12.6px;letter-spacing:0.891px;color:#3f68a3;text-decoration:underline;">No</span>
<span style="left:1237.50px;top:832.70px;font-size:12.6px;letter-spacing:0.079px;">Con tecnología de</span>
<span style="left:1368.00px;top:830.75px;font-size:14.5px;letter-spacing:-0.141px;color:#666;">bing</span>
<span style="left:1565.00px;top:833.70px;font-size:12.6px;letter-spacing:-0.090px;color:#3f68a3;">Privacidad</span>
<span style="left:8.00px;top:868.20px;font-size:11.6px;letter-spacing:-0.214px;color:#555;">Página 8 de 8</span>
<span style="left:98.00px;top:868.20px;font-size:11.6px;letter-spacing:-0.186px;color:#555;">326 palabras</span>
<span style="left:218.00px;top:868.20px;font-size:11.6px;letter-spacing:-0.314px;color:#555;">Español (Ecuador)</span>
<span style="left:1243.00px;top:868.20px;font-size:11.6px;letter-spacing:-0.314px;color:#555;">Concentración</span>
<span style="left:1611.00px;top:868.20px;font-size:11.6px;letter-spacing:-0.969px;color:#555;">100 %</span>
<svg style="left:0;top:0" width="1650" height="883" viewBox="0 0 1650 883"><path d="M600.1 54.5C598.5 56.5 597 58.500 597 60.300C605 61.200 612 60.800 616.700 60.600C630 60.200 640 59.500 648.400 59.200C660 58.500 670 58 680 57.900C700 57.700 715 57.900 725 58.200C735 58.400 742 58.500 746.700 58.700C753 59.200 758 59.700 762.600 60.200C772 60.900 780 61.200 786 61.300C793 61.500 798 62.200 802 62.200C807 62.200 810 61.500 813.300 61.800C816 62.200 817.500 63.200 817.300 65C817.300 69 817 73 816.500 76.700C815.500 82 814.500 88 814 92.500C813.300 98 812.800 104 812.500 108.400C812.200 114 812 120 812 124.300C812 130 812.200 136 812.500 140C813 146 814.500 151 816.500 154.400C819.500 159 824 163.500 829 167C834 170.500 839 174 843.800 176.900C830 177.600 812 177.500 800 177.500C740 177.700 680 177.600 622 177.500C614 177.400 608 174.300 604 168.700C601 164 600 158 599.500 152C598.500 130 598 100 597.700 76L597.300 61.500" fill="none" stroke="#d8222b" stroke-width="4.200" stroke-linecap="round" stroke-linejoin="round"/></svg>
</body></html>
